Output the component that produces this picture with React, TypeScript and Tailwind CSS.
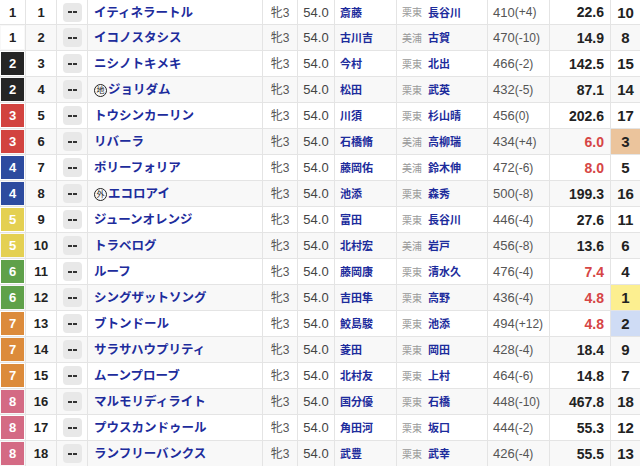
import React from 'react'

type Row = {
  waku: number
  num: number
  name: string
  mark?: string
  jockey: string
  area: string
  trainer: string
  bw: string
  diff: string
  odds: string
  pop: number
}

const rows: Row[] = [
  { waku: 1, num: 1, name: 'イティネラートル', jockey: '斎藤', area: '栗東', trainer: '長谷川', bw: '410', diff: '(+4)', odds: '22.6', pop: 10 },
  { waku: 1, num: 2, name: 'イコノスタシス', jockey: '古川吉', area: '美浦', trainer: '古賀', bw: '470', diff: '(-10)', odds: '14.9', pop: 8 },
  { waku: 2, num: 3, name: 'ニシノトキメキ', jockey: '今村', area: '栗東', trainer: '北出', bw: '466', diff: '(-2)', odds: '142.5', pop: 15 },
  { waku: 2, num: 4, name: 'ジョリダム', mark: '地', jockey: '松田', area: '栗東', trainer: '武英', bw: '432', diff: '(-5)', odds: '87.1', pop: 14 },
  { waku: 3, num: 5, name: 'トウシンカーリン', jockey: '川須', area: '栗東', trainer: '杉山晴', bw: '456', diff: '(0)', odds: '202.6', pop: 17 },
  { waku: 3, num: 6, name: 'リバーラ', jockey: '石橋脩', area: '美浦', trainer: '高柳瑞', bw: '434', diff: '(+4)', odds: '6.0', pop: 3 },
  { waku: 4, num: 7, name: 'ポリーフォリア', jockey: '藤岡佑', area: '美浦', trainer: '鈴木伸', bw: '472', diff: '(-6)', odds: '8.0', pop: 5 },
  { waku: 4, num: 8, name: 'エコロアイ', mark: '外', jockey: '池添', area: '栗東', trainer: '森秀', bw: '500', diff: '(-8)', odds: '199.3', pop: 16 },
  { waku: 5, num: 9, name: 'ジューンオレンジ', jockey: '富田', area: '栗東', trainer: '長谷川', bw: '446', diff: '(-4)', odds: '27.6', pop: 11 },
  { waku: 5, num: 10, name: 'トラベログ', jockey: '北村宏', area: '美浦', trainer: '岩戸', bw: '456', diff: '(-8)', odds: '13.6', pop: 6 },
  { waku: 6, num: 11, name: 'ルーフ', jockey: '藤岡康', area: '栗東', trainer: '清水久', bw: '476', diff: '(-4)', odds: '7.4', pop: 4 },
  { waku: 6, num: 12, name: 'シングザットソング', jockey: '吉田隼', area: '栗東', trainer: '高野', bw: '436', diff: '(-4)', odds: '4.8', pop: 1 },
  { waku: 7, num: 13, name: 'ブトンドール', jockey: '鮫島駿', area: '栗東', trainer: '池添', bw: '494', diff: '(+12)', odds: '4.8', pop: 2 },
  { waku: 7, num: 14, name: 'サラサハウプリティ', jockey: '菱田', area: '栗東', trainer: '岡田', bw: '428', diff: '(-4)', odds: '18.4', pop: 9 },
  { waku: 7, num: 15, name: 'ムーンプローブ', jockey: '北村友', area: '栗東', trainer: '上村', bw: '464', diff: '(-6)', odds: '14.8', pop: 7 },
  { waku: 8, num: 16, name: 'マルモリディライト', jockey: '国分優', area: '栗東', trainer: '石橋', bw: '448', diff: '(-10)', odds: '467.8', pop: 18 },
  { waku: 8, num: 17, name: 'プウスカンドゥール', jockey: '角田河', area: '栗東', trainer: '坂口', bw: '444', diff: '(-2)', odds: '55.3', pop: 12 },
  { waku: 8, num: 18, name: 'ランフリーバンクス', jockey: '武豊', area: '栗東', trainer: '武幸', bw: '426', diff: '(-4)', odds: '55.5', pop: 13 },
]

// 枠の色
const wakuStyle: Record<number, string> = {
  1: 'bg-white text-[#222]',
  2: 'bg-[#252525] text-white',
  3: 'bg-[#d2433f] text-white',
  4: 'bg-[#2d4b9f] text-white',
  5: 'bg-[#e4d052] text-white',
  6: 'bg-[#5fa14a] text-white',
  7: 'bg-[#dc8b3b] text-white',
  8: 'bg-[#d46a84] text-white',
}

const popStyle: Record<number, string> = {
  1: 'bg-[#fcef90]',
  2: 'bg-[#cfdcf5]',
  3: 'bg-[#ebc49c]',
}

const cell = 'flex items-center border-r border-[#e4e4e4] leading-none'

function HorseRow({ r, i }: { r: Row; i: number }) {
  const odd = parseFloat(r.odds) < 10
  return (
    <div
      className={`grid grid-cols-[26px_31px_31px_175px_35px_37px_62px_91px_62px_61px_29px] border-b border-[#e4e4e4] ${
        i === 0 ? 'h-[25px]' : 'h-[26px]'
      } ${i % 2 === 1 ? 'bg-[#f8f8f8]' : 'bg-white'}`}
    >
      <div className={`${cell} p-px`}>
        <div className={`flex h-full w-full items-center justify-center text-[13px] font-bold ${wakuStyle[r.waku]}`}>
          {r.waku}
        </div>
      </div>
      <div className={`${cell} justify-center text-[13px] font-semibold text-[#222]`}>{r.num}</div>
      <div className={`${cell} justify-center`}>
        <div className="flex h-[19px] w-[19px] items-center justify-center gap-[1px] rounded-[4px] bg-[#e8e8e8]">
          <span className="h-[2px] w-[4px] bg-[#333]" />
          <span className="h-[2px] w-[4px] bg-[#333]" />
        </div>
      </div>
      <div className={`${cell} pl-[6px] pt-[2px] text-[12.5px] font-bold text-[#1d2c9c]`}>
        {r.mark ? (
          <span className="mr-px flex h-[13px] w-[13px] items-center justify-center rounded-full border border-[#222] text-[8px] font-normal text-[#222]">
            {r.mark}
          </span>
        ) : null}
        {r.name}
      </div>
      <div className={`${cell} justify-center pt-[1px] text-[12px] text-[#555]`}>牝3</div>
      <div className={`${cell} justify-center text-[13px] text-[#444]`}>54.0</div>
      <div className={`${cell} pl-[5px] pt-[2px] text-[11px] font-bold text-[#1d2c9c]`}>{r.jockey}</div>
      <div className={`${cell} pl-[5px] pt-[2px]`}>
        <span className="text-[10px] text-[#999]">{r.area}</span>
        <span className="ml-[6px] text-[11px] font-bold text-[#1d2c9c]">{r.trainer}</span>
      </div>
      <div className={`${cell} pl-[5px] text-[13px] text-[#555]`}>
        {r.bw}
        <span className="text-[12px]">{r.diff}</span>
      </div>
      <div className={`${cell} justify-end pr-[6px] text-[14px] font-bold ${odd ? 'text-[#d64545]' : 'text-[#222]'}`}>
        {r.odds}
      </div>
      <div className={`flex items-center justify-center text-[15px] font-bold leading-none text-[#222] ${popStyle[r.pop] ?? ''}`}>
        {r.pop}
      </div>
    </div>
  )
}

export default function App() {
  return (
    <div className="h-[466px] w-[640px] overflow-hidden bg-white font-['Liberation_Sans','Noto_Sans_CJK_JP',sans-serif]">
      {rows.map((r, i) => (
        <HorseRow key={r.num} r={r} i={i} />
      ))}
    </div>
  )
}
